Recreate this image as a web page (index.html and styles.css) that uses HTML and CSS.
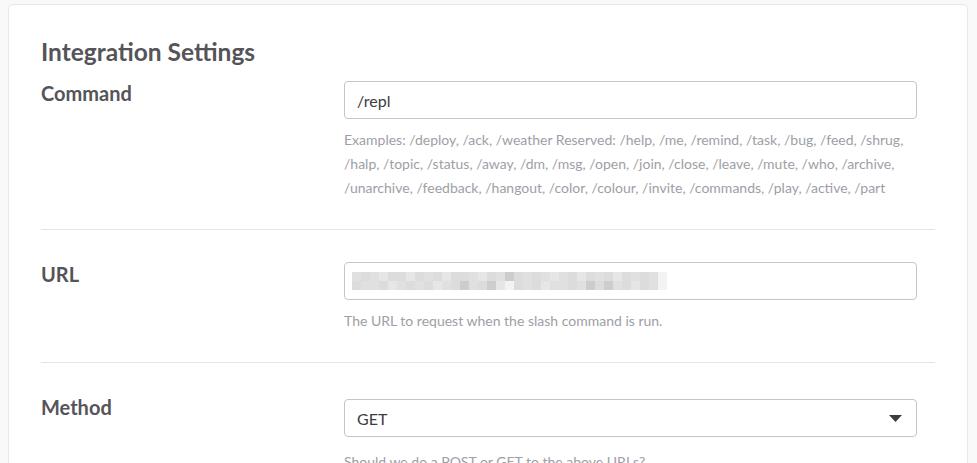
FILE: index.html
```html
<!DOCTYPE html>
<html>
<head>
<meta charset="utf-8">
<link rel="stylesheet" href="styles.css">
</head>
<body>
<div class="card">
  <h2 class="title">Integration Settings</h2>
  <div class="row row-first">
    <label class="label">Command</label>
    <div class="field">
      <div class="input">/repl</div>
      <p class="hint">Examples: /deploy, /ack, /weather Reserved: /help, /me, /remind, /task, /bug, /feed, /shrug, /halp, /topic, /status, /away, /dm, /msg, /open, /join, /close, /leave, /mute, /who, /archive, /unarchive, /feedback, /hangout, /color, /colour, /invite, /commands, /play, /active, /part</p>
    </div>
  </div>
  <div class="row">
    <label class="label">URL</label>
    <div class="field">
      <div class="input">
        <div class="blur">
          <div class="blur-row">
            <i class="c"></i><i class="b"></i><i class="c"></i><i class="a"></i><i class="b"></i><i class="b"></i><i class="a"></i><i class="b"></i><i class="c"></i><i class="b"></i><i class="a"></i><i class="b"></i><i class="b"></i><i class="c"></i><i class="a"></i><i class="b"></i><i class="c"></i><i class="d"></i><i class="b"></i><i class="c"></i><i class="b"></i><i class="c"></i><i class="a"></i><i class="c"></i><i class="b"></i><i class="a"></i><i class="b"></i><i class="c"></i><i class="b"></i><i class="a"></i><i class="b"></i><i class="c"></i><i class="b"></i><i class="c"></i><i class="e"></i>
          </div>
          <div class="blur-row">
            <i class="b"></i><i class="c"></i><i class="c"></i><i class="b"></i><i class="a"></i><i class="c"></i><i class="b"></i><i class="c"></i><i class="b"></i><i class="a"></i><i class="c"></i><i class="b"></i><i class="d"></i><i class="c"></i><i class="b"></i><i class="d"></i><i class="a"></i><i class="e"></i><i class="b"></i><i class="c"></i><i class="b"></i><i class="a"></i><i class="c"></i><i class="c"></i><i class="b"></i><i class="c"></i><i class="d"></i><i class="b"></i><i class="d"></i><i class="c"></i><i class="b"></i><i class="a"></i><i class="b"></i><i class="c"></i><i class="e"></i>
          </div>
        </div>
      </div>
      <p class="hint">The URL to request when the slash command is run.</p>
    </div>
  </div>
  <div class="row">
    <label class="label">Method</label>
    <div class="field">
      <div class="input select">
        <span>GET</span>
        <svg class="caret" width="13" height="7" viewBox="0 0 13 7"><path d="M0 0H13L6.5 7Z" fill="#3d3c40"/></svg>
      </div>
      <p class="hint">Should we do a POST or GET to the above URLs?</p>
    </div>
  </div>
</div>
</body>
</html>
```

FILE: styles.css
```css
html, body {
  margin: 0;
  padding: 0;
  background: #f9f9f9;
}
body {
  padding: 4px 9px 0 8px;
  font-family: Lato, "Noto Sans", sans-serif;
  color: #555459;
}
.card {
  background: #fff;
  border: 1px solid #e8e8e8;
  border-radius: 5px;
  padding: 27px 32px 0 32px;
  height: 600px;
  box-sizing: border-box;
}
.title {
  margin: 0;
  font-size: 24.5px;
  font-weight: 700;
  line-height: 40px;
  color: #555459;
}
.row {
  display: grid;
  grid-template-columns: 303px 573px;
  align-items: start;
  padding: 32px 0 29px;
  border-top: 1px solid #e5e5e5;
}
.row-first {
  border-top: none;
  padding-top: 9px;
}
.label {
  font-size: 20px;
  font-weight: 700;
  line-height: 24px;
  color: #555459;
}
.field {
  display: flex;
  flex-direction: column;
}
.input {
  height: 38px;
  box-sizing: border-box;
  border: 1px solid #c5c5c5;
  border-radius: 4px;
  padding: 0 12px;
  display: flex;
  align-items: center;
  font-size: 16px;
  color: #3d3c40;
}
.hint {
  margin: 9px 0 0;
  font-size: 14px;
  line-height: 24px;
  color: #9e9ea6;
}
.blur {
  display: flex;
  flex-direction: column;
  margin-left: -5px;
}
.blur-row {
  display: flex;
}
.blur-row i {
  display: block;
  width: 9px;
  height: 9px;
}
.blur-row i.a { background: #e6e6e6; }
.blur-row i.b { background: #dcdcdc; }
.blur-row i.c { background: #e0e0e0; }
.blur-row i.d { background: #cdcdcd; }
.blur-row i.e { background: #f3f3f3; }
.select {
  margin: 4px 0 4px;
  justify-content: space-between;
  padding-right: 14px;
}
.caret {
  display: block;
}
```
